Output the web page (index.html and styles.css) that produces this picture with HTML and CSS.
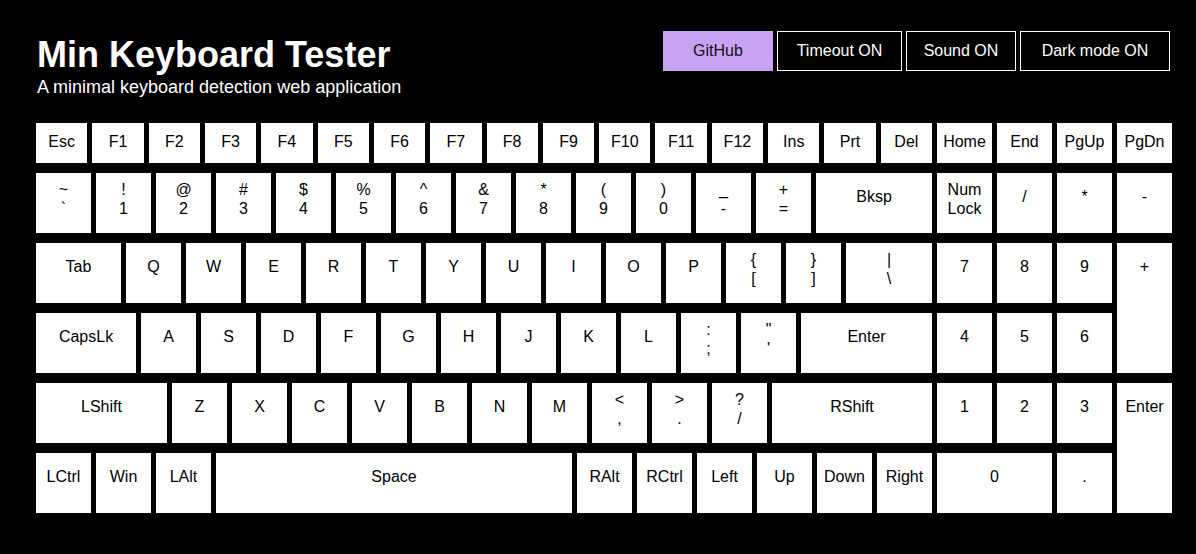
FILE: index.html
```html
<!DOCTYPE html>
<html>
<head>
<meta charset="utf-8">
<title>Min Keyboard Tester</title>
<link rel="stylesheet" href="styles.css">
</head>
<body>
<header class="header">
  <div class="titles">
    <h1 class="title">Min Keyboard Tester</h1>
    <p class="subtitle">A minimal keyboard detection web application</p>
  </div>
  <nav class="buttons">
    <button class="btn btn-github">GitHub</button>
    <button class="btn btn-timeout">Timeout ON</button>
    <button class="btn btn-sound">Sound ON</button>
    <button class="btn btn-dark">Dark mode ON</button>
  </nav>
</header>
<main class="keyboard">
  <div class="frow">
    <div class="fmain">
      <div class="key fkey">Esc</div><div class="key fkey">F1</div><div class="key fkey">F2</div><div class="key fkey">F3</div>
      <div class="key fkey">F4</div><div class="key fkey">F5</div><div class="key fkey">F6</div><div class="key fkey">F7</div>
      <div class="key fkey">F8</div><div class="key fkey">F9</div><div class="key fkey">F10</div><div class="key fkey">F11</div>
      <div class="key fkey">F12</div><div class="key fkey">Ins</div><div class="key fkey">Prt</div><div class="key fkey">Del</div>
    </div>
    <div class="fnum">
      <div class="key fkey">Home</div><div class="key fkey">End</div><div class="key fkey">PgUp</div><div class="key fkey">PgDn</div>
    </div>
  </div>
  <div class="body">
    <div class="main">
      <div class="row">
        <div class="key dual"><span>~</span><span>`</span></div>
        <div class="key dual"><span>!</span><span>1</span></div>
        <div class="key dual"><span>@</span><span>2</span></div>
        <div class="key dual"><span>#</span><span>3</span></div>
        <div class="key dual"><span>$</span><span>4</span></div>
        <div class="key dual"><span>%</span><span>5</span></div>
        <div class="key dual"><span>^</span><span>6</span></div>
        <div class="key dual"><span>&amp;</span><span>7</span></div>
        <div class="key dual"><span>*</span><span>8</span></div>
        <div class="key dual"><span>(</span><span>9</span></div>
        <div class="key dual"><span>)</span><span>0</span></div>
        <div class="key dual"><span>_</span><span>-</span></div>
        <div class="key dual"><span>+</span><span>=</span></div>
        <div class="key grow">Bksp</div>
      </div>
      <div class="row">
        <div class="key w85">Tab</div>
        <div class="key">Q</div><div class="key">W</div><div class="key">E</div><div class="key">R</div>
        <div class="key">T</div><div class="key">Y</div><div class="key">U</div><div class="key">I</div>
        <div class="key">O</div><div class="key">P</div>
        <div class="key dual"><span>{</span><span>[</span></div>
        <div class="key dual"><span>}</span><span>]</span></div>
        <div class="key dual grow"><span>|</span><span>\</span></div>
      </div>
      <div class="row">
        <div class="key w100">CapsLk</div>
        <div class="key">A</div><div class="key">S</div><div class="key">D</div><div class="key">F</div>
        <div class="key">G</div><div class="key">H</div><div class="key">J</div><div class="key">K</div>
        <div class="key">L</div>
        <div class="key dual"><span>:</span><span>;</span></div>
        <div class="key dual"><span>"</span><span>'</span></div>
        <div class="key grow">Enter</div>
      </div>
      <div class="row">
        <div class="key w131">LShift</div>
        <div class="key">Z</div><div class="key">X</div><div class="key">C</div><div class="key">V</div>
        <div class="key">B</div><div class="key">N</div><div class="key">M</div>
        <div class="key dual"><span>&lt;</span><span>,</span></div>
        <div class="key dual"><span>&gt;</span><span>.</span></div>
        <div class="key dual"><span>?</span><span>/</span></div>
        <div class="key grow">RShift</div>
      </div>
      <div class="row">
        <div class="key">LCtrl</div><div class="key">Win</div><div class="key">LAlt</div>
        <div class="key grow">Space</div>
        <div class="key">RAlt</div><div class="key">RCtrl</div><div class="key">Left</div>
        <div class="key">Up</div><div class="key">Down</div><div class="key">Right</div>
      </div>
    </div>
    <div class="numpad">
      <div class="key dual"><span>Num</span><span>Lock</span></div>
      <div class="key">/</div>
      <div class="key">*</div>
      <div class="key">-</div>
      <div class="key">7</div>
      <div class="key">8</div>
      <div class="key">9</div>
      <div class="key tall">+</div>
      <div class="key">4</div>
      <div class="key">5</div>
      <div class="key">6</div>
      <div class="key">1</div>
      <div class="key">2</div>
      <div class="key">3</div>
      <div class="key tall">Enter</div>
      <div class="key wide">0</div>
      <div class="key">.</div>
    </div>
  </div>
</main>
</body>
</html>
```
FILE: styles.css
```css
* { box-sizing: border-box; }
html, body { margin: 0; padding: 0; background: #000; }
body {
  font-family: "Liberation Sans", Arial, sans-serif;
  color: #fff;
  width: 1196px;
  height: 554px;
  overflow: hidden;
}
.header {
  display: flex;
  justify-content: space-between;
  align-items: flex-start;
  padding: 31px 26px 0 37px;
  height: 123px;
}
.titles { padding-top: 3px; }
.title {
  margin: 0;
  font-size: 36px;
  font-weight: bold;
  line-height: 42px;
}
.subtitle {
  margin: 0;
  font-size: 18px;
  line-height: 22px;
}
.buttons {
  display: flex;
  gap: 4px;
  margin-left: -1px;
}
.btn {
  font-family: "Liberation Sans", Arial, sans-serif;
  font-size: 16px;
  height: 40px;
  padding: 0;
  background: #000;
  color: #fff;
  border: 1px solid #fff;
  cursor: pointer;
}
.btn-github {
  background: #c8a3f4;
  color: #111;
  border-color: #c8a3f4;
  width: 110px;
}
.btn-timeout { width: 125px; }
.btn-sound { width: 110px; }
.btn-dark { width: 150px; }
.keyboard {
  margin-left: 36px;
  width: 1136px;
}
.key {
  background: #fff;
  color: #000;
  font-size: 16px;
  line-height: 18px;
  width: 55px;
  flex: none;
  display: flex;
  flex-direction: column;
  align-items: center;
  padding-top: 15px;
  text-align: center;
}
.key.dual { padding-top: 7px; line-height: 19px; }
.frow {
  display: flex;
  gap: 5px;
  height: 40px;
}
.fmain { display: flex; gap: 5px; width: 896px; }
.fnum { display: flex; gap: 5px; width: 235px; }
.fkey { padding-top: 10px; }
.fmain .fkey { flex: 1; width: auto; }
.body {
  display: flex;
  gap: 5px;
  margin-top: 10px;
}
.main {
  width: 896px;
  display: flex;
  flex-direction: column;
  gap: 10px;
}
.row {
  display: flex;
  gap: 5px;
  height: 60px;
}
.grow { flex: 1; width: auto; }
.w85 { width: 85px; }
.w100 { width: 100px; }
.w131 { width: 131px; }
.numpad {
  width: 235px;
  display: grid;
  grid-template-columns: repeat(4, 55px);
  grid-auto-rows: 60px;
  column-gap: 5px;
  row-gap: 10px;
}
.numpad .key { width: auto; }
.tall { grid-row: span 2; }
.wide { grid-column: span 2; }
```
